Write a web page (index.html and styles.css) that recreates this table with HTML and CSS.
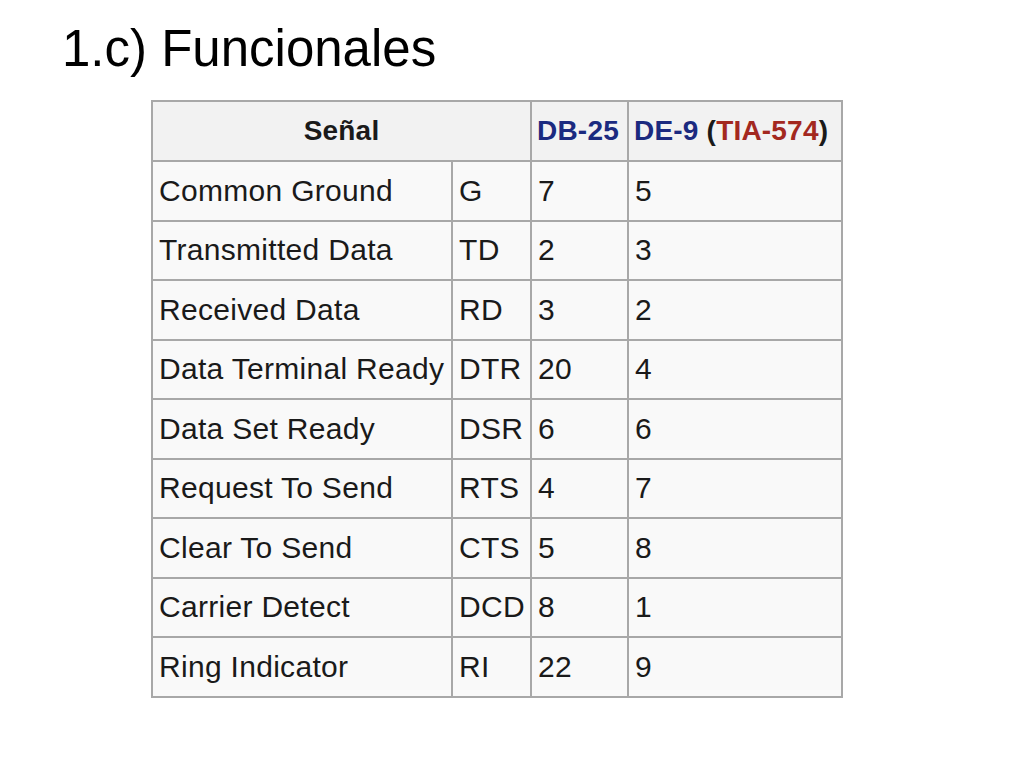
FILE: index.html
```html
<!DOCTYPE html>
<html lang="es">
<head>
<meta charset="utf-8">
<title>1.c) Funcionales</title>
<link rel="stylesheet" href="styles.css">
</head>
<body>
<main class="slide">
  <h1 class="title">1.c) Funcionales</h1>
  <table class="wikitable">
    <colgroup>
      <col class="c1"><col class="c2"><col class="c3"><col class="c4">
    </colgroup>
    <thead>
      <tr>
        <th colspan="2" class="center">Señal</th>
        <th><span class="link">DB-25</span></th>
        <th><span class="link">DE-9</span> (<span class="redlink">TIA-574</span>)</th>
      </tr>
    </thead>
    <tbody>
      <tr><td>Common Ground</td><td>G</td><td>7</td><td>5</td></tr>
      <tr><td>Transmitted Data</td><td>TD</td><td>2</td><td>3</td></tr>
      <tr><td>Received Data</td><td>RD</td><td>3</td><td>2</td></tr>
      <tr><td>Data Terminal Ready</td><td>DTR</td><td>20</td><td>4</td></tr>
      <tr><td>Data Set Ready</td><td>DSR</td><td>6</td><td>6</td></tr>
      <tr><td>Request To Send</td><td>RTS</td><td>4</td><td>7</td></tr>
      <tr><td>Clear To Send</td><td>CTS</td><td>5</td><td>8</td></tr>
      <tr><td>Carrier Detect</td><td>DCD</td><td>8</td><td>1</td></tr>
      <tr><td>Ring Indicator</td><td>RI</td><td>22</td><td>9</td></tr>
    </tbody>
  </table>
</main>
</body>
</html>
```

FILE: styles.css
```css
html, body {
  margin: 0;
  padding: 0;
  background: #ffffff;
}

.slide {
  width: 1024px;
  height: 768px;
  padding: 19px 0 0 0;
  box-sizing: border-box;
  font-family: "Liberation Sans", Arial, sans-serif;
}

.title {
  margin: 0 0 21px 62px;
  font-size: 51px;
  line-height: 60px;
  font-weight: normal;
  color: #000;
}

.wikitable {
  margin-left: 151px;
  width: 692px;
  table-layout: fixed;
  border-collapse: collapse;
  background: #f9f9f9;
  border: 2px solid #a8a8a8;
  font-size: 30px;
  letter-spacing: 0.3px;
  color: #1a1a1a;
}

.c1 { width: 300px; }
.c2 { width: 79px; }
.c3 { width: 97px; }
.c4 { width: 214px; }

.wikitable th,
.wikitable td {
  border: 2px solid #a8a8a8;
  padding: 0 0 0 6px;
  text-align: left;
  vertical-align: middle;
  white-space: nowrap;
  overflow: hidden;
}

.wikitable th {
  background: #f2f2f2;
  font-weight: bold;
  height: 58px;
  font-size: 28px;
  letter-spacing: 0.2px;
  padding-left: 5px;
}

.wikitable th.center {
  text-align: center;
  padding-left: 0;
}

.wikitable td {
  height: 57.5px;
}

.link { color: #1b2a80; }
.redlink { color: #a3281f; }
```
